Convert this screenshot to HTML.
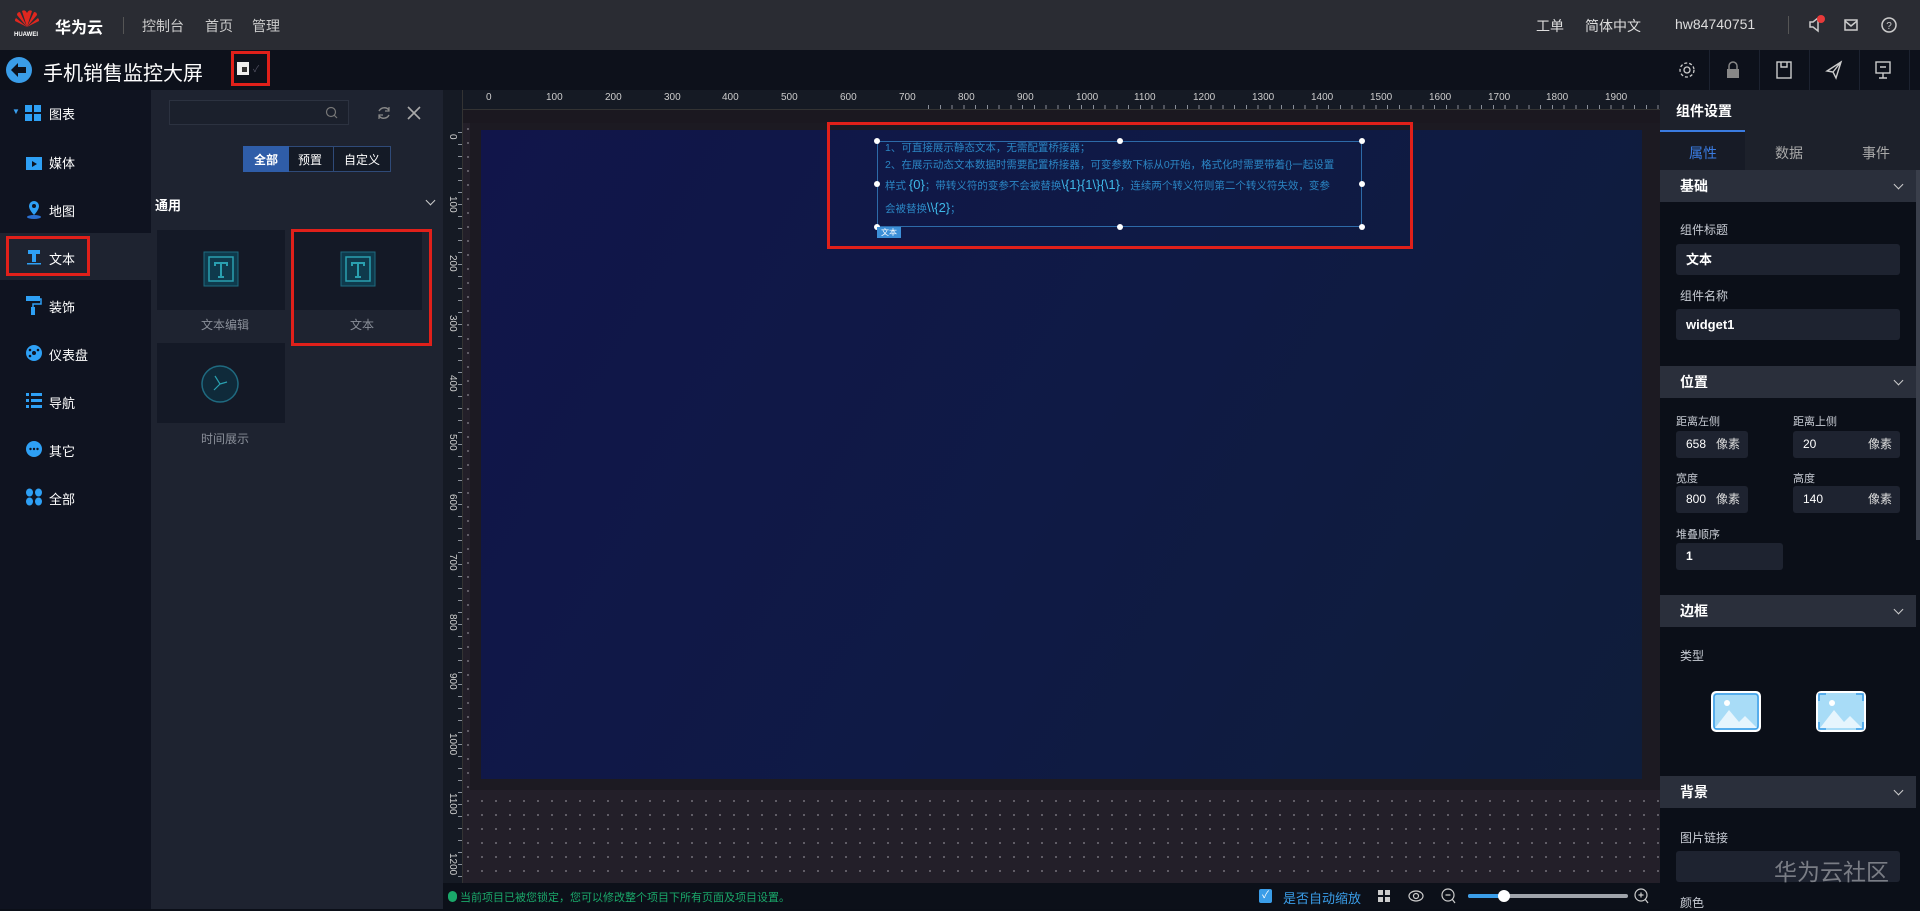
<!DOCTYPE html>
<html><head><meta charset="utf-8">
<style>
*{margin:0;padding:0;box-sizing:border-box}
body{width:1920px;height:909px;overflow:hidden;background:#0b0f18;font-family:"Liberation Sans","Noto Sans CJK SC",sans-serif;position:relative;color:#fff}
.a{position:absolute}
.t{position:absolute;white-space:nowrap}
.nav{font-size:13px;color:#fff}
.hdr{position:absolute;left:1660px;width:256px;height:32px;background:#2a2f3b;font-size:14px;font-weight:bold;padding-left:20px;line-height:32px}
.hdr:after{content:"";position:absolute;right:14px;top:11px;width:6px;height:6px;border-right:1.5px solid #ccc;border-bottom:1.5px solid #ccc;transform:rotate(45deg)}
.lbl{position:absolute;font-size:12px;color:#c8ccd4}
.inp{position:absolute;background:#1e2330;border-radius:3px;font-size:13px;color:#fff;padding-left:10px;font-weight:bold}
.unit{position:absolute;right:8px;font-size:12px;color:#ddd;font-weight:normal}
</style></head><body>
<!-- top bar -->
<div class="a" style="left:0;top:0;width:1920px;height:50px;background:#2a2c33"></div>
<svg class="a" style="left:14px;top:9px" width="26" height="20" viewBox="0 0 26 20">
<g fill="#e0271f"><path d="M13 18 L8 2 Q11 0 13 4Z"/><path d="M13 18 L18 2 Q15 0 13 4Z"/><path d="M13 18 L3 6 Q3 3 6 3Z"/><path d="M13 18 L23 6 Q23 3 20 3Z"/><path d="M13 18 L1 12 Q1 10 2 9Z"/><path d="M13 18 L25 12 Q25 10 24 9Z"/></g></svg>
<div class="t" style="left:14px;top:32px;font-size:6px;color:#fff;font-weight:bold">HUAWEI</div>
<div class="t" style="left:55px;top:14px;font-size:16px;font-weight:bold">华为云</div>
<div class="a" style="left:123px;top:17px;width:1px;height:17px;background:#555"></div>
<div class="t" style="left:142px;top:16px;font-size:14px;color:#ccc">控制台</div>
<div class="t" style="left:205px;top:16px;font-size:14px;color:#ccc">首页</div>
<div class="t" style="left:252px;top:16px;font-size:14px;color:#ccc">管理</div>
<div class="t" style="left:1536px;top:16px;font-size:14px;color:#ddd">工单</div>
<div class="t" style="left:1585px;top:16px;font-size:14px;color:#ddd">简体中文</div>
<div class="t" style="left:1675px;top:16px;font-size:14px;color:#ddd">hw84740751</div>
<div class="a" style="left:1788px;top:16px;width:1px;height:18px;background:#555"></div>
<svg class="a" style="left:1807px;top:14px" width="18" height="20"><path d="M3 8h3l5-4v13l-5-4H3z" fill="none" stroke="#ccc" stroke-width="1.5"/><circle cx="14" cy="5" r="4" fill="#e83a3a"/></svg>
<svg class="a" style="left:1843px;top:17px" width="16" height="16"><rect x="2" y="3" width="12" height="10" fill="none" stroke="#ccc" stroke-width="1.5"/><path d="M2 4l6 5 6-5" fill="none" stroke="#ccc" stroke-width="1.5"/></svg>
<svg class="a" style="left:1880px;top:16px" width="18" height="18"><circle cx="9" cy="9" r="7" fill="none" stroke="#ccc" stroke-width="1.5"/><text x="9" y="13" font-size="10" fill="#ccc" text-anchor="middle" font-family="Liberation Sans">?</text></svg>

<!-- second bar -->
<div class="a" style="left:0;top:50px;width:1920px;height:40px;background:#0d111b"></div>
<svg class="a" style="left:5px;top:56px" width="28" height="28"><circle cx="14" cy="14" r="13" fill="#3a9de8"/><path d="M6 14l7-7v4h8v6h-8v4z" fill="#0d111b"/></svg>
<div class="t" style="left:43px;top:57px;font-size:20px;color:#fff">手机销售监控大屏</div>
<div class="a" style="left:231px;top:51px;width:39px;height:35px;border:3px solid #e0201a"></div>
<div class="a" style="left:237px;top:62px;width:12px;height:13px;border:2px solid #eee;background:#eee"><div style="position:absolute;left:3px;top:3px;width:5px;height:5px;background:#333"></div></div>
<div class="t" style="left:253px;top:62px;font-size:9px;color:#556">✓</div>
<svg class="a" style="left:1677px;top:60px" width="20" height="20"><circle cx="10" cy="10" r="3" fill="none" stroke="#ccc" stroke-width="1.3"/><circle cx="10" cy="10" r="7" fill="none" stroke="#ccc" stroke-width="1.3" stroke-dasharray="3 2"/></svg>
<div class="a" style="left:1709px;top:50px;width:1px;height:40px;background:#1c2230"></div>
<svg class="a" style="left:1726px;top:60px" width="14" height="20"><path d="M3 9V6a4 4 0 0 1 8 0v3" fill="none" stroke="#888" stroke-width="1.5"/><rect x="1" y="9" width="12" height="9" fill="#888"/></svg>
<div class="a" style="left:1759px;top:50px;width:1px;height:40px;background:#1c2230"></div>
<svg class="a" style="left:1776px;top:61px" width="16" height="18"><rect x="1" y="1" width="14" height="16" fill="none" stroke="#ccc" stroke-width="1.4"/><path d="M5 1v5h6V1" fill="none" stroke="#ccc" stroke-width="1.4"/></svg>
<div class="a" style="left:1809px;top:50px;width:1px;height:40px;background:#1c2230"></div>
<svg class="a" style="left:1825px;top:60px" width="18" height="20"><path d="M16 2L2 11l6 1 3 6z M8 12l8-10" fill="none" stroke="#ccc" stroke-width="1.4"/></svg>
<div class="a" style="left:1859px;top:50px;width:1px;height:40px;background:#1c2230"></div>
<svg class="a" style="left:1875px;top:61px" width="16" height="18"><rect x="1" y="1" width="14" height="11" fill="none" stroke="#ccc" stroke-width="1.4"/><path d="M5 6h6M8 12v5M4 17h8" stroke="#ccc" stroke-width="1.4"/></svg>
<div class="a" style="left:1909px;top:50px;width:1px;height:40px;background:#1c2230"></div>

<!-- left nav -->
<div class="a" style="left:0;top:90px;width:151px;height:819px;background:#0f1320"></div>
<div class="a" style="left:0;top:233px;width:151px;height:47px;background:#1e2330"></div>
<div class="t" style="left:12px;top:107px;font-size:8px;color:#3aa0f0">▼</div>
<svg class="a" style="left:25px;top:105px" width="17" height="17"><rect x="0" y="0" width="7" height="7" fill="#2ea0f5"/><rect x="9" y="0" width="7" height="7" fill="#2ea0f5"/><rect x="0" y="9" width="7" height="7" fill="#2ea0f5"/><rect x="9" y="9" width="7" height="7" fill="#2ea0f5"/></svg>
<div class="t nav" style="left:49px;top:104px">图表</div>
<svg class="a" style="left:26px;top:154px" width="16" height="16"><rect x="0" y="3" width="16" height="13" fill="#2ea0f5"/><path d="M6 7l5 3-5 3z" fill="#0f1320"/></svg>
<div class="t nav" style="left:49px;top:153px">媒体</div>
<svg class="a" style="left:26px;top:201px" width="16" height="18"><path d="M8 0a5 5 0 0 1 5 5c0 4-5 9-5 9S3 9 3 5a5 5 0 0 1 5-5z" fill="#2ea0f5"/><circle cx="8" cy="5" r="2" fill="#0f1320"/><ellipse cx="8" cy="16" rx="7" ry="2" fill="#2a6fd0"/></svg>
<div class="t nav" style="left:49px;top:201px">地图</div>
<div class="a" style="left:6px;top:236px;width:84px;height:40px;border:3px solid #e0201a"></div>
<svg class="a" style="left:27px;top:249px" width="14" height="16"><path d="M1 1h12v4H9v8H5V5H1z" fill="#2ea0f5"/><rect x="0" y="14" width="14" height="1.5" fill="#2ea0f5"/></svg>
<div class="t nav" style="left:49px;top:249px">文本</div>
<svg class="a" style="left:26px;top:296px" width="16" height="20"><rect x="0" y="0" width="14" height="5" fill="#2ea0f5"/><path d="M14 3h1v5H7v3" fill="none" stroke="#2ea0f5" stroke-width="1.5"/><rect x="5" y="11" width="4" height="8" fill="#2ea0f5"/></svg>
<div class="t nav" style="left:49px;top:297px">装饰</div>
<svg class="a" style="left:25px;top:344px" width="18" height="18"><circle cx="9" cy="9" r="8" fill="#2ea0f5"/><circle cx="9" cy="9" r="2" fill="#0f1320"/><circle cx="5" cy="6" r="1.3" fill="#0f1320"/><circle cx="13" cy="6" r="1.3" fill="#0f1320"/><circle cx="5" cy="12" r="1.3" fill="#0f1320"/></svg>
<div class="t nav" style="left:49px;top:345px">仪表盘</div>
<svg class="a" style="left:26px;top:393px" width="16" height="15"><g fill="#2ea0f5"><rect x="0" y="0" width="3" height="3"/><rect x="5" y="0" width="11" height="3"/><rect x="0" y="6" width="3" height="3"/><rect x="5" y="6" width="11" height="3"/><rect x="0" y="12" width="3" height="3"/><rect x="5" y="12" width="11" height="3"/></g></svg>
<div class="t nav" style="left:49px;top:393px">导航</div>
<svg class="a" style="left:25px;top:440px" width="18" height="18"><circle cx="9" cy="9" r="8" fill="#2ea0f5"/><g fill="#0f1320"><circle cx="5.5" cy="9" r="1.2"/><circle cx="9" cy="9" r="1.2"/><circle cx="12.5" cy="9" r="1.2"/></g></svg>
<div class="t nav" style="left:49px;top:441px">其它</div>
<svg class="a" style="left:25px;top:488px" width="18" height="18"><g fill="#2ea0f5"><ellipse cx="4.5" cy="4.5" rx="3.5" ry="4"/><ellipse cx="13.5" cy="4.5" rx="3.5" ry="4"/><ellipse cx="4.5" cy="13.5" rx="3.5" ry="4"/><ellipse cx="13.5" cy="13.5" rx="3.5" ry="4"/></g></svg>
<div class="t nav" style="left:49px;top:489px">全部</div>

<!-- component panel -->
<div class="a" style="left:151px;top:90px;width:292px;height:819px;background:#1e2330"></div>
<div class="a" style="left:169px;top:100px;width:180px;height:25px;border:1px solid #2c3240;background:#1b202c"></div>
<svg class="a" style="left:325px;top:106px" width="13" height="13"><circle cx="6" cy="6" r="4.5" fill="none" stroke="#777" stroke-width="1.2"/><path d="M9 9l3 3" stroke="#777" stroke-width="1.2"/></svg>
<svg class="a" style="left:376px;top:105px" width="16" height="16"><path d="M13 5A6 6 0 0 0 3 6M3 11a6 6 0 0 0 10-1" fill="none" stroke="#888" stroke-width="1.4"/><path d="M13 2v4h-4M3 14v-4h4" fill="none" stroke="#888" stroke-width="1.2"/></svg>
<svg class="a" style="left:407px;top:106px" width="14" height="14"><path d="M1 1l12 12M13 1L1 13" stroke="#aaa" stroke-width="1.6"/></svg>
<div class="a" style="left:243px;top:146px;width:148px;height:26px;border:1px solid #2f4a78;background:#141a26"></div>
<div class="a" style="left:243px;top:146px;width:46px;height:26px;background:#2f5da8"></div>
<div class="a" style="left:333px;top:147px;width:1px;height:24px;background:#2f4a78"></div>
<div class="t" style="left:254px;top:151px;font-size:12px;font-weight:bold">全部</div>
<div class="t" style="left:298px;top:151px;font-size:12px">预置</div>
<div class="t" style="left:344px;top:151px;font-size:12px">自定义</div>
<div class="t" style="left:155px;top:195px;font-size:13px;font-weight:bold">通用</div>
<div class="a" style="left:427px;top:197px;width:7px;height:7px;border-right:1.5px solid #ccc;border-bottom:1.5px solid #ccc;transform:rotate(45deg)"></div>
<div class="a" style="left:157px;top:230px;width:128px;height:80px;background:#141926"></div>
<div class="a" style="left:294px;top:230px;width:128px;height:80px;background:#141926"></div>
<div class="a" style="left:157px;top:343px;width:128px;height:80px;background:#141926"></div>
<svg class="a" style="left:203px;top:251px" width="36" height="36"><rect x="1" y="1" width="34" height="34" fill="#0f3a4c" stroke="#1d6a80"/><rect x="6" y="6" width="24" height="24" fill="none" stroke="#2aa0b0" stroke-width="1.5"/><path d="M11 11h14v4h-2v-2h-4v12h2v2h-6v-2h2V13h-4v2h-2z" fill="#2aa0b0"/></svg>
<svg class="a" style="left:340px;top:251px" width="36" height="36"><rect x="1" y="1" width="34" height="34" fill="#0f3a4c" stroke="#1d6a80"/><rect x="6" y="6" width="24" height="24" fill="none" stroke="#2aa0b0" stroke-width="1.5"/><path d="M11 11h14v4h-2v-2h-4v12h2v2h-6v-2h2V13h-4v2h-2z" fill="#2aa0b0"/></svg>
<svg class="a" style="left:200px;top:363px" width="40" height="42"><circle cx="20" cy="21" r="18" fill="#0f2a3a" stroke="#1f6a80" stroke-width="1.5"/><path d="M20 21l-5-8M20 21l7-2M20 21l-6 6" stroke="#2aa0b0" stroke-width="1.2"/></svg>
<div class="t" style="left:201px;top:316px;font-size:12px;color:#8a8f99">文本编辑</div>
<div class="t" style="left:350px;top:316px;font-size:12px;color:#8a8f99">文本</div>
<div class="t" style="left:201px;top:430px;font-size:12px;color:#8a8f99">时间展示</div>
<div class="a" style="left:291px;top:229px;width:141px;height:117px;border:3px solid #e0201a"></div>

<!-- canvas -->
<div class="a" style="left:443px;top:90px;width:1217px;height:795px;background-color:#231f29;background-image:radial-gradient(circle,#6a6670 0.9px,transparent 1.2px);background-size:14px 14px;background-position:4px 4px"></div>
<div class="a" style="left:463px;top:110px;width:1197px;height:13px;background:#1b1820"></div>
<div class="a" style="left:470px;top:123px;width:1190px;height:667px;background:#1c1a22"></div>
<div class="a" style="left:481px;top:130px;width:1161px;height:649px;background:linear-gradient(120deg,#11154a 0%,#0f1a45 50%,#0f1d3a 100%)"></div>
<!-- rulers -->
<div class="a" style="left:443px;top:90px;width:1217px;height:20px;background:#151a24;background-image:repeating-linear-gradient(90deg,#8a8f99 0 1px,transparent 1px 11.77px);background-size:100% 5px;background-repeat:no-repeat;background-position:485px 15px;border-bottom:1px solid #333"></div>
<div class="a" style="left:443px;top:90px;width:20px;height:795px;background:#151a24;background-image:repeating-linear-gradient(180deg,#8a8f99 0 1px,transparent 1px 12px);background-size:5px 100%;background-repeat:no-repeat;background-position:15px 42px;border-right:1px solid #333"></div>

<!-- selected text widget -->
<div class="a" style="left:827px;top:122px;width:586px;height:127px;border:3px solid #e0201a"></div>
<div class="a" style="left:877px;top:141px;width:485px;height:86px;border:1px solid #2d6aa8"></div>
<div class="a" style="left:874px;top:138px;width:6px;height:6px;border-radius:3px;background:#fff"></div>
<div class="a" style="left:1117px;top:138px;width:6px;height:6px;border-radius:3px;background:#fff"></div>
<div class="a" style="left:1359px;top:138px;width:6px;height:6px;border-radius:3px;background:#fff"></div>
<div class="a" style="left:874px;top:181px;width:6px;height:6px;border-radius:3px;background:#fff"></div>
<div class="a" style="left:1359px;top:181px;width:6px;height:6px;border-radius:3px;background:#fff"></div>
<div class="a" style="left:874px;top:224px;width:6px;height:6px;border-radius:3px;background:#fff"></div>
<div class="a" style="left:1117px;top:224px;width:6px;height:6px;border-radius:3px;background:#fff"></div>
<div class="a" style="left:1359px;top:224px;width:6px;height:6px;border-radius:3px;background:#fff"></div>
<div class="a" style="left:877px;top:227px;width:24px;height:11px;background:#3c8fd8;font-size:8px;line-height:11px;text-align:center">文本</div>
<div class="a" style="left:885px;top:140px;width:475px;font-size:10.5px;line-height:17px;color:#2b86c4">
<div class="t" style="position:relative">1、可直接展示静态文本，无需配置桥接器；</div>
<div class="t" style="position:relative">2、在展示动态文本数据时需要配置桥接器，可变参数下标从0开始，格式化时需要带着{}一起设置</div>
<div class="t" style="position:relative;line-height:21px">样式 <span style="color:#3fb8e8;font-size:13px">{0}</span>；带转义符的变参不会被替换<span style="color:#3fb8e8;font-size:13px">\{1}{1\}{\1}</span>，连续两个转义符则第二个转义符失效，变参</div>
<div class="t" style="position:relative;line-height:21px">会被替换<span style="color:#3fb8e8;font-size:13px">\\{2}</span>；</div>
</div>

<!-- status -->
<div class="a" style="left:443px;top:883px;width:1217px;height:26px;background:#0c1019"></div>
<div class="t" style="left:448px;top:889px;font-size:11px;color:#1aa86a"><span style="display:inline-block;width:9px;height:11px;border-radius:5px;background:#1aa86a;vertical-align:-1px"></span> 当前项目已被您锁定，您可以修改整个项目下所有页面及项目设置。</div>
<div class="a" style="left:1259px;top:889px;width:13px;height:14px;background:#3a9de8;border-radius:2px;font-size:10px;line-height:14px;text-align:center">✓</div>
<div class="t" style="left:1283px;top:888px;font-size:13px;color:#3a9de8">是否自动缩放</div>
<svg class="a" style="left:1378px;top:890px" width="12" height="12"><g fill="#ccc"><rect width="5" height="5"/><rect x="7" width="5" height="5"/><rect y="7" width="5" height="5"/><rect x="7" y="7" width="5" height="5"/></g></svg>
<svg class="a" style="left:1408px;top:889px" width="16" height="14"><ellipse cx="8" cy="7" rx="7" ry="5" fill="none" stroke="#ccc" stroke-width="1.2"/><circle cx="8" cy="7" r="2.5" fill="none" stroke="#ccc" stroke-width="1.2"/></svg>
<svg class="a" style="left:1441px;top:888px" width="15" height="16"><circle cx="7" cy="7" r="6" fill="none" stroke="#ccc" stroke-width="1.2"/><path d="M4.5 7h5M11 11l3 4" stroke="#ccc" stroke-width="1.2"/></svg>
<div class="a" style="left:1468px;top:894px;width:160px;height:4px;background:#a0a4ab;border-radius:2px"></div>
<div class="a" style="left:1468px;top:894px;width:36px;height:4px;background:#3a9de8;border-radius:2px"></div>
<div class="a" style="left:1498px;top:890px;width:12px;height:12px;background:#fff;border-radius:6px"></div>
<svg class="a" style="left:1634px;top:888px" width="15" height="16"><circle cx="7" cy="7" r="6" fill="none" stroke="#ccc" stroke-width="1.2"/><path d="M4.5 7h5M7 4.5v5M11 11l3 4" stroke="#ccc" stroke-width="1.2"/></svg>

<!-- right panel -->
<div class="a" style="left:1660px;top:90px;width:260px;height:819px;background:#0b0f18"></div>
<div class="a" style="left:1660px;top:90px;width:260px;height:80px;background:#1d212b"></div>
<div class="t" style="left:1676px;top:101px;font-size:14px;font-weight:bold">组件设置</div>
<div class="a" style="left:1660px;top:130px;width:85px;height:41px;background:#171b26;border-top:2px solid #3a7be0"></div>
<div class="t" style="left:1689px;top:143px;font-size:14px;color:#3a7be0">属性</div>
<div class="t" style="left:1775px;top:143px;font-size:14px;color:#aaa">数据</div>
<div class="t" style="left:1862px;top:143px;font-size:14px;color:#aaa">事件</div>
<div class="a" style="left:1916px;top:170px;width:4px;height:370px;background:#3a3f4b"></div>
<div class="hdr" style="top:170px">基础</div>
<div class="lbl" style="left:1680px;top:221px">组件标题</div>
<div class="inp" style="left:1676px;top:244px;width:224px;height:31px;line-height:31px">文本</div>
<div class="lbl" style="left:1680px;top:287px">组件名称</div>
<div class="inp" style="left:1676px;top:309px;width:224px;height:31px;line-height:31px">widget1</div>
<div class="hdr" style="top:366px">位置</div>
<div class="lbl" style="left:1676px;top:413px;font-size:11px">距离左侧</div>
<div class="lbl" style="left:1793px;top:413px;font-size:11px">距离上侧</div>
<div class="inp" style="left:1676px;top:431px;width:72px;height:27px;line-height:27px;font-size:12px;font-weight:normal">658<span class="unit">像素</span></div>
<div class="inp" style="left:1793px;top:431px;width:107px;height:27px;line-height:27px;font-size:12px;font-weight:normal">20<span class="unit">像素</span></div>
<div class="lbl" style="left:1676px;top:470px;font-size:11px">宽度</div>
<div class="lbl" style="left:1793px;top:470px;font-size:11px">高度</div>
<div class="inp" style="left:1676px;top:486px;width:72px;height:27px;line-height:27px;font-size:12px;font-weight:normal">800<span class="unit">像素</span></div>
<div class="inp" style="left:1793px;top:486px;width:107px;height:27px;line-height:27px;font-size:12px;font-weight:normal">140<span class="unit">像素</span></div>
<div class="lbl" style="left:1676px;top:526px;font-size:11px">堆叠顺序</div>
<div class="inp" style="left:1676px;top:543px;width:107px;height:27px;line-height:27px;font-size:12px">1</div>
<div class="hdr" style="top:595px">边框</div>
<div class="lbl" style="left:1680px;top:647px">类型</div>
<svg class="a" style="left:1711px;top:691px" width="50" height="41"><rect x="1" y="1" width="48" height="39" rx="4" fill="#a8dcf7" stroke="#fff" stroke-width="2"/><rect x="3" y="3" width="44" height="35" rx="3" fill="none" stroke="#3a9de8" stroke-width="1.5"/><circle cx="16" cy="12" r="3" fill="#fff"/><path d="M4 37l14-18 10 12 6-6 12 12z" fill="#e6f5fd"/></svg>
<svg class="a" style="left:1816px;top:691px" width="50" height="41"><rect x="1" y="1" width="48" height="39" rx="4" fill="#a8dcf7" stroke="#fff" stroke-width="2"/><path d="M3 10V3h7M40 3h7v7M47 31v7h-7M10 38H3v-7" fill="none" stroke="#3a9de8" stroke-width="1.5"/><circle cx="16" cy="12" r="3" fill="#fff"/><path d="M4 37l14-18 10 12 6-6 12 12z" fill="#e6f5fd"/></svg>
<div class="hdr" style="top:776px">背景</div>
<div class="lbl" style="left:1680px;top:829px">图片链接</div>
<div class="inp" style="left:1676px;top:851px;width:224px;height:31px"></div>
<div class="t" style="left:1774px;top:853px;font-size:23px;color:#7a7d85">华为云社区</div>
<div class="lbl" style="left:1680px;top:894px">颜色</div>

<!-- ruler labels -->
<div class="t" style="top:92px;left:0;font-size:10px;color:#ccc;width:0">
<span class="t" style="left:486px">0</span><span class="t" style="left:546px">100</span><span class="t" style="left:605px">200</span><span class="t" style="left:664px">300</span><span class="t" style="left:722px">400</span><span class="t" style="left:781px">500</span><span class="t" style="left:840px">600</span><span class="t" style="left:899px">700</span><span class="t" style="left:958px">800</span><span class="t" style="left:1017px">900</span><span class="t" style="left:1076px">1000</span><span class="t" style="left:1134px">1100</span><span class="t" style="left:1193px">1200</span><span class="t" style="left:1252px">1300</span><span class="t" style="left:1311px">1400</span><span class="t" style="left:1370px">1500</span><span class="t" style="left:1429px">1600</span><span class="t" style="left:1488px">1700</span><span class="t" style="left:1546px">1800</span><span class="t" style="left:1605px">1900</span></div>
<div class="a" style="left:443px;top:0;width:20px;height:909px;font-size:10px;color:#ccc">
<span class="t" style="top:134px;left:15px;transform:rotate(90deg);transform-origin:0 0">0</span>
<span class="t" style="top:196px;left:15px;transform:rotate(90deg);transform-origin:0 0">100</span>
<span class="t" style="top:255px;left:15px;transform:rotate(90deg);transform-origin:0 0">200</span>
<span class="t" style="top:315px;left:15px;transform:rotate(90deg);transform-origin:0 0">300</span>
<span class="t" style="top:375px;left:15px;transform:rotate(90deg);transform-origin:0 0">400</span>
<span class="t" style="top:434px;left:15px;transform:rotate(90deg);transform-origin:0 0">500</span>
<span class="t" style="top:494px;left:15px;transform:rotate(90deg);transform-origin:0 0">600</span>
<span class="t" style="top:554px;left:15px;transform:rotate(90deg);transform-origin:0 0">700</span>
<span class="t" style="top:614px;left:15px;transform:rotate(90deg);transform-origin:0 0">800</span>
<span class="t" style="top:673px;left:15px;transform:rotate(90deg);transform-origin:0 0">900</span>
<span class="t" style="top:733px;left:15px;transform:rotate(90deg);transform-origin:0 0">1000</span>
<span class="t" style="top:793px;left:15px;transform:rotate(90deg);transform-origin:0 0">1100</span>
<span class="t" style="top:853px;left:15px;transform:rotate(90deg);transform-origin:0 0">1200</span>
</div>
</body></html>
